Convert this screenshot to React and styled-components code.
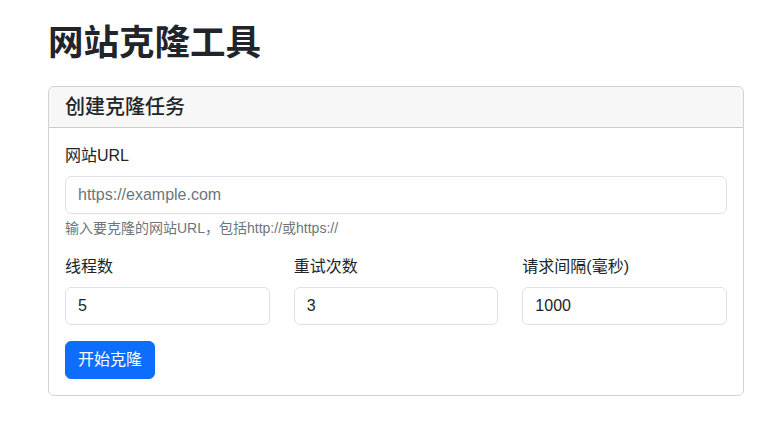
import React from "react";
import styled, { createGlobalStyle } from "styled-components";

const GlobalStyle = createGlobalStyle`
  * { box-sizing: border-box; }
  body {
    margin: 0;
    background: #fff;
    color: #212529;
    font-family: "Liberation Sans", "Noto Sans CJK SC", sans-serif;
    font-size: 16px;
    line-height: 1.5;
  }
`;

const Page = styled.div`
  padding: 22px 33px 0 48px;
`;

const Title = styled.h1`
  margin: 0 0 22px;
  font-size: 35.5px;
  line-height: 42px;
  font-weight: 600;
`;

const Card = styled.section`
  border: 1px solid rgba(0, 0, 0, 0.175);
  border-radius: 6px;
  overflow: hidden;
`;

const CardHeader = styled.div`
  padding: 8px 16px;
  background: rgba(0, 0, 0, 0.03);
  border-bottom: 1px solid rgba(0, 0, 0, 0.175);
  h5 {
    margin: 0;
    font-size: 20px;
    line-height: 24px;
    font-weight: 500;
  }
`;

const CardBody = styled.form`
  padding: 16px;
`;

const Field = styled.div`
  margin-bottom: ${(p) => (p.$last ? "0" : "16px")};
`;

const Label = styled.label`
  display: block;
  margin-bottom: 8px;
  line-height: 24px;
`;

const Input = styled.input`
  display: block;
  width: 100%;
  height: 38px;
  padding: 6px 12px;
  font: inherit;
  font-size: 16px;
  line-height: 24px;
  color: #212529;
  background: #fff;
  border: 1px solid #dee2e6;
  border-radius: 6px;
  outline: none;
  &::placeholder {
    color: #6c757d;
  }
`;

const Help = styled.div`
  margin-top: 4px;
  font-size: 14px;
  line-height: 21px;
  color: #6c757d;
`;

const Row = styled.div`
  display: grid;
  grid-template-columns: repeat(3, 1fr);
  column-gap: 24px;
  margin-bottom: 16px;
`;

const Button = styled.button`
  height: 38px;
  padding: 6px 12px;
  font: inherit;
  font-size: 16px;
  line-height: 24px;
  color: #fff;
  background: #0d6efd;
  border: 1px solid #0d6efd;
  border-radius: 6px;
  cursor: pointer;
`;

export default function App() {
  return (
    <>
      <GlobalStyle />
      <Page>
        <Title>网站克隆工具</Title>
        <Card>
          <CardHeader>
            <h5>创建克隆任务</h5>
          </CardHeader>
          <CardBody onSubmit={(e) => e.preventDefault()}>
            <Field>
              <Label htmlFor="url">网站URL</Label>
              <Input id="url" type="text" placeholder="https://example.com" />
              <Help>输入要克隆的网站URL，包括http://或https://</Help>
            </Field>
            <Row>
              <Field $last>
                <Label htmlFor="threads">线程数</Label>
                <Input id="threads" type="text" defaultValue="5" />
              </Field>
              <Field $last>
                <Label htmlFor="retries">重试次数</Label>
                <Input id="retries" type="text" defaultValue="3" />
              </Field>
              <Field $last>
                <Label htmlFor="delay">请求间隔(毫秒)</Label>
                <Input id="delay" type="text" defaultValue="1000" />
              </Field>
            </Row>
            <Button type="submit">开始克隆</Button>
          </CardBody>
        </Card>
      </Page>
    </>
  );
}
